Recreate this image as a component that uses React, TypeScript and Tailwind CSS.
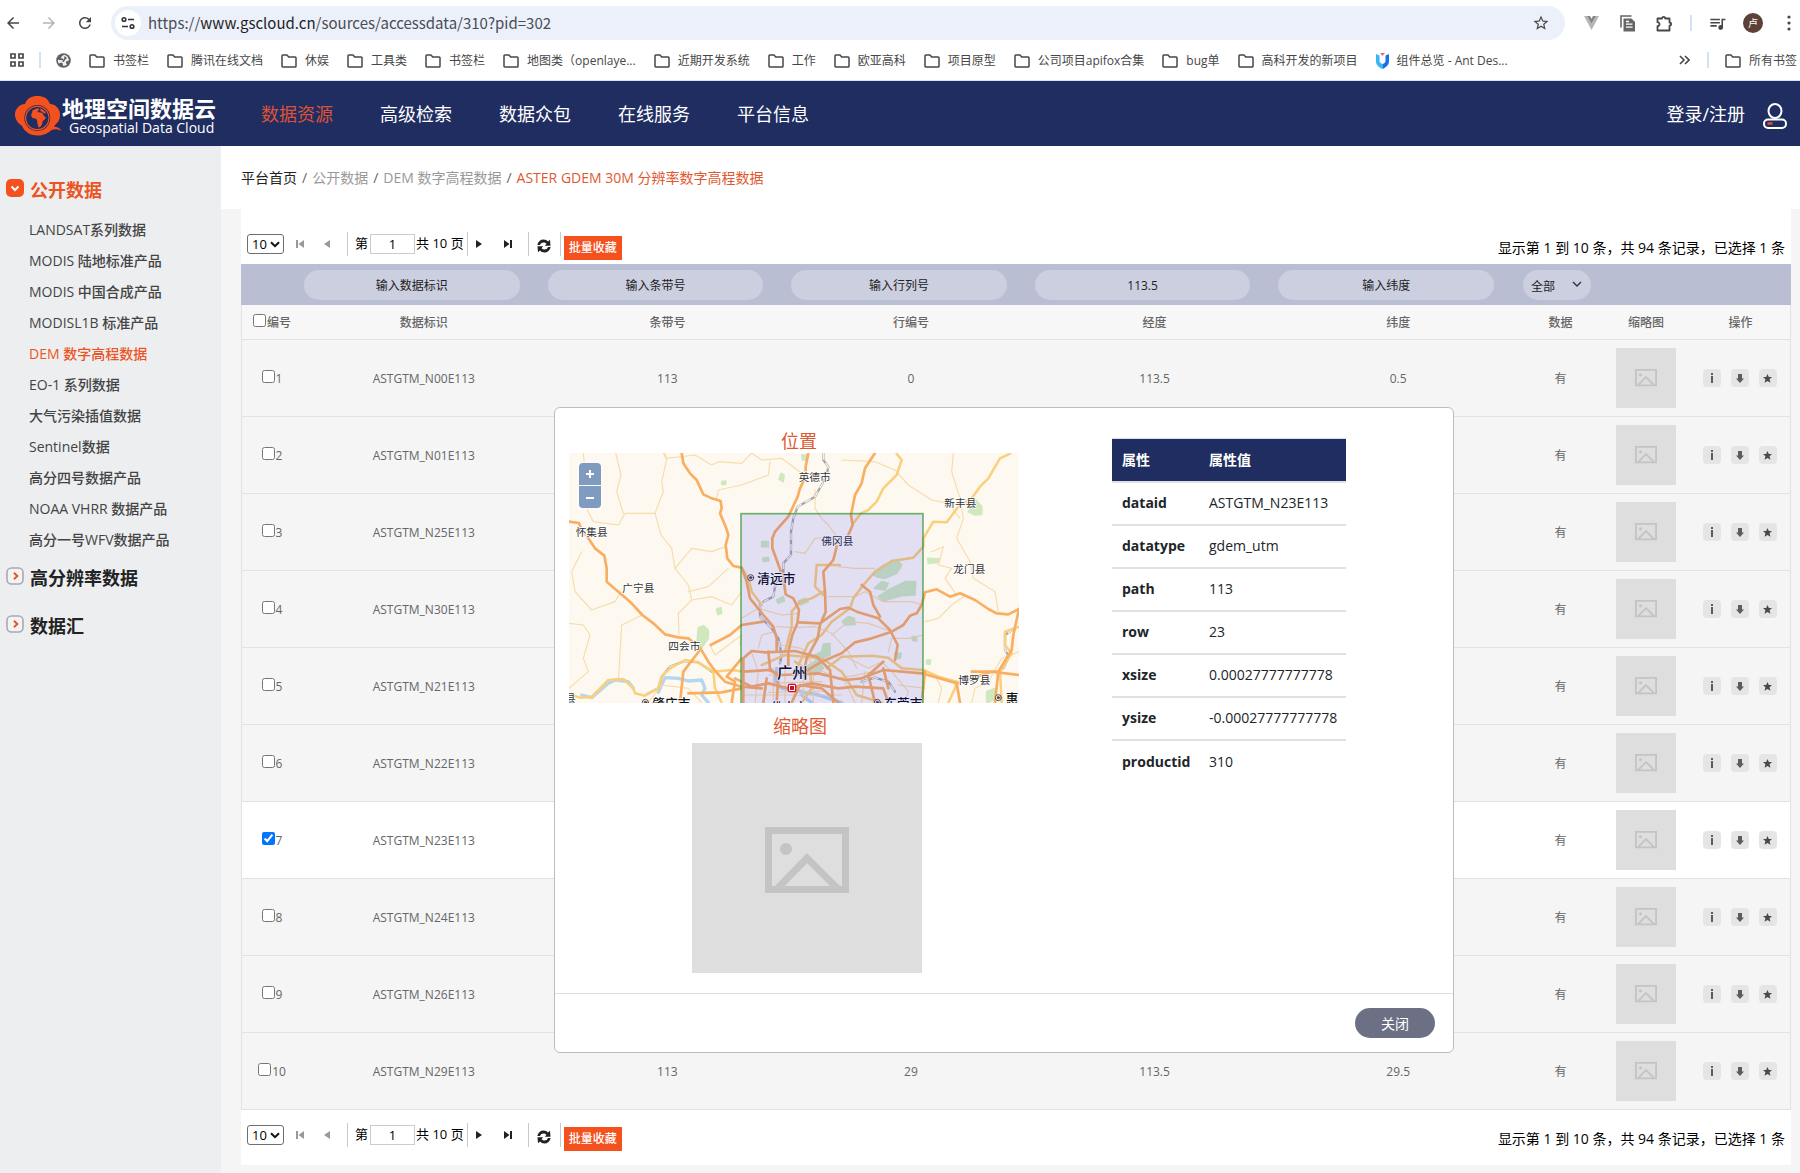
import React, { useState } from "react";
import { MdArrowBack, MdArrowForward, MdRefresh, MdStarOutline, MdQueueMusic } from "react-icons/md";

const HEADER_LINKS = ["数据资源", "高级检索", "数据众包", "在线服务", "平台信息"];

const BOOKMARKS = [
  "书签栏",
  "腾讯在线文档",
  "休娱",
  "工具类",
  "书签栏",
  "地图类（openlaye...",
  "近期开发系统",
  "工作",
  "欧亚高科",
  "项目原型",
  "公司项目apifox合集",
  "bug单",
  "高科开发的新项目",
];

const PRODUCTS = [
  "LANDSAT系列数据",
  "MODIS 陆地标准产品",
  "MODIS 中国合成产品",
  "MODISL1B 标准产品",
  "DEM 数字高程数据",
  "EO-1 系列数据",
  "大气污染插值数据",
  "Sentinel数据",
  "高分四号数据产品",
  "NOAA VHRR 数据产品",
  "高分一号WFV数据产品",
];

const LATITUDES = ["00", "01", "25", "30", "21", "22", "23", "24", "26", "29"];

const FILTERS = [
  { label: "输入数据标识", value: "" },
  { label: "输入条带号", value: "" },
  { label: "输入行列号", value: "" },
  { label: "输入经度", value: "113.5" },
  { label: "输入纬度", value: "" },
];

const ATTRIBUTES: [string, string][] = [
  ["dataid", "ASTGTM_N23E113"],
  ["datatype", "gdem_utm"],
  ["path", "113"],
  ["row", "23"],
  ["xsize", "0.00027777777778"],
  ["ysize", "-0.00027777777778"],
  ["productid", "310"],
];

function FolderIcon() {
  return (
    <svg className="h-3.5 w-4 shrink-0" viewBox="0 0 16 14" fill="none" stroke="#474747" strokeWidth="1.5" strokeLinejoin="round">
      <path d="M1 12.2V1.8C1 1.3 1.3 1 1.8 1H6l1.7 2h6.5c.5 0 .8.3.8.8v8.4c0 .5-.3.8-.8.8H1.8c-.5 0-.8-.3-.8-.8Z" />
    </svg>
  );
}

function BrowserChrome() {
  return (
    <div className="border-b border-[#d3e0f5] bg-white text-[#474747]">
      <div className="flex h-10 items-end">
        <div className="flex h-[34px] w-[111px] shrink-0 items-center gap-[18px] pl-1">
          <button aria-label="后退"><MdArrowBack size={18} /></button>
          <button aria-label="前进" className="text-[#b4b4b4]"><MdArrowForward size={18} /></button>
          <button aria-label="刷新"><MdRefresh size={18} /></button>
        </div>
        <div className="flex h-[34px] flex-1 items-center rounded-full bg-[#ebf0fa] pl-[4px] pr-[15px]">
          <button aria-label="网站信息" className="flex size-[26px] shrink-0 items-center justify-center rounded-full bg-white">
            <svg width="14" height="14" viewBox="0 0 14 14" fill="none" stroke="#333" strokeWidth="1.6">
              <circle cx="3" cy="3.5" r="1.8" />
              <path d="M7 3.5h6M1 10.5h6" />
              <circle cx="11" cy="10.5" r="1.8" />
            </svg>
          </button>
          <p className="ml-[7px] flex-1 pb-px font-['Noto_Sans_CJK_SC',sans-serif] text-[15px] leading-5 text-[#4a4d52]">
            https://<span className="text-[#1f1f1f]">www.gscloud.cn</span>/sources/accessdata/310?pid=302
          </p>
          <button aria-label="收藏此标签页"><MdStarOutline size={18} /></button>
        </div>
        <div className="flex h-[34px] w-[235px] shrink-0 items-center">
          <button aria-label="Vue 开发者工具" className="ml-[19px]">
            <svg width="15" height="14" viewBox="0 0 15 14">
              <path d="M0 0h3l4.500 7.800L12 0h3L7.500 14Z" fill="#b5b5b5" />
              <path d="M3 0h3l1.500 2.700L9 0h3L7.500 7.800Z" fill="#858585" />
            </svg>
          </button>
          <button aria-label="复制扩展" className="ml-[21px]">
            <svg width="16" height="17" viewBox="0 0 16 17">
              <path d="M1 12.500V1h10.500" fill="none" stroke="#666" strokeWidth="1.600" />
              <path d="M3.500 3.500h8l3.500 3.500v9.500H3.500Z" fill="#666" />
              <path d="M6 9.200h6.500M6 12.200h6.500M6 6.500h3" stroke="#fff" strokeWidth="1.300" />
            </svg>
          </button>
          <button aria-label="扩展程序" className="ml-[20px]">
            <svg width="17" height="17" viewBox="0 0 17 17" fill="none" stroke="#474747" strokeWidth="1.800" strokeLinejoin="round">
              <path d="M1.500 3.500H6a1.600 1.600 0 0 1 3.200 0h4.300v4a1.600 1.600 0 0 1 0 3.200v4.800h-12v-4.300a2 2 0 0 0 0-4Z" />
            </svg>
          </button>
          <span className="ml-[17px] h-4 w-[2px] bg-[#d3e0f5]" />
          <button aria-label="媒体控件" className="ml-[16px]"><MdQueueMusic size={19} /></button>
          <button aria-label="个人资料" className="ml-[16px] flex size-5 items-center justify-center rounded-full bg-[#5d4037] text-[10px] leading-none text-white">卢</button>
          <button aria-label="更多" className="ml-auto mr-[9px]">
            <svg width="4" height="16" viewBox="0 0 4 16" fill="#474747">
              <circle cx="2" cy="2" r="1.600" /><circle cx="2" cy="8" r="1.600" /><circle cx="2" cy="14" r="1.600" />
            </svg>
          </button>
        </div>
      </div>
      <nav aria-label="书签" className="flex h-10 items-center whitespace-nowrap pl-[10px] text-xs">
        <svg className="shrink-0" width="14" height="14" viewBox="0 0 14 14" fill="none" stroke="#474747" strokeWidth="1.700">
          <path d="M1 1h4v4H1ZM9 1h4v4H9ZM1 9h4v4H1ZM9 9h4v4H9Z" />
        </svg>
        <span className="ml-[15px] h-4 w-[2px] shrink-0 bg-[#d3e0f5]" />
        <svg className="ml-[15px] shrink-0" width="15" height="15" viewBox="0 0 15 15">
          <circle cx="7.500" cy="7.500" r="7.300" fill="#5f6368" />
          <path d="M8 1.800 5.200 4c-.6 1 .3 1.600 1.300 1.500 1.500-.1 1.200 1.500.2 1.800L3 7l-1-.4c-.3 1.500 0 2.800.7 4l2.600-1.200 1.400.9.300 2.500c1.500.2 3-.2 4-1l-1.200-2 .6-1.600 2.500-.8C12.800 4.800 11 2.400 8 1.800Z" fill="#fff" fillOpacity=".9" />
          <path d="m8.500 3 2.500 2-1.500 1.200L7.800 9 6 8.500 8 6Z" fill="#5f6368" />
        </svg>
        <div className="ml-[18px] flex items-center gap-[18px] pt-px">
          {BOOKMARKS.map((name, i) => (
            <a href="#" key={i} className="flex items-center gap-2"><FolderIcon />{name}</a>
          ))}
          <a href="#" className="flex items-center gap-2">
            <svg width="13" height="16" viewBox="0 0 13 16">
              <path d="M0 1l3.500 1.500v5c0 1.800 1 2.800 3 3.600V16C2 13.800 0 11.500 0 8Z" fill="#35b6f5" />
              <path d="M13 1L9.500 2.500v5c0 1.800-1 2.800-3 3.600V16C11 13.800 13 11.500 13 8Z" fill="#1673e6" />
              <path d="M4 0h5L6.500 3Z" fill="#ef6a6f" />
            </svg>
            组件总览 - Ant Des...
          </a>
        </div>
        <button aria-label="更多书签" className="ml-auto">
          <svg width="11" height="10" viewBox="0 0 11 10" fill="none" stroke="#474747" strokeWidth="1.600"><path d="m1 1 4 4-4 4M6 1l4 4-4 4" /></svg>
        </button>
        <span className="ml-[17px] mr-[16px] h-4 w-[2px] shrink-0 bg-[#d3e0f5]" />
        <a href="#" className="mr-[3px] flex items-center gap-2 pt-px"><FolderIcon />所有书签</a>
      </nav>
    </div>
  );
}

function SiteHeader() {
  return (
    <header className="flex h-[65px] items-center bg-[#202d61] text-lg leading-6 text-white">
      <a href="#" className="flex w-[261px] shrink-0 items-center pl-[15px]">
        <svg className="mt-1 shrink-0" width="47" height="40" viewBox="0 0 47 40">
          <path d="M10 8C12 2 17 0 22.500 0S33 2 35 8c6 .5 10 5 10 11 0 4-1.500 7-4 9-1 1-1.500 2-2 2.500 3 .5 6 1.500 7.500 4.500-3.500-2-6.500-2-10-1-4.500 4-8.500 5.500-14 5.500-6.500 0-12.500-3-15.500-9.500C2.500 27 0 23 0 18.500 0 13 4 8.500 10 8Z" fill="#f5511e" />
          <circle cx="22.300" cy="22" r="13" fill="#202d61" />
          <circle cx="22.300" cy="22" r="11.700" fill="none" stroke="#f5511e" strokeWidth="1.200" />
          <path d="m17.500 14.500 3-1.500 2.500-.8 1.500 1.300-1.500 1-.5 1.500 3 .5 2 .5 1.500 3 2 1.500-1.500 2-2 2-.5 3-1.800 2.500-1.700.5-1-3.500-.5-4-1.500-1.500-3-.5-1.500-2.500 1-3 .5-2Z" fill="#f5511e" />
          <path d="m25 12.500 3.500 1.500 2.500 3-1.500.5-2-1.500-2-1Z" fill="#f5511e" />
        </svg>
        <span className="flex flex-col pt-1">
          <span className="text-[22px] font-bold leading-6">地理空间数据云</span>
          <span className="pl-[7px] text-sm font-medium leading-4">Geospatial Data Cloud</span>
        </span>
      </a>
      <nav className="flex gap-[47px]">
        {HEADER_LINKS.map((name, i) => (
          <a href="#" key={name} className={i === 0 ? "text-[#dd5237]" : ""}>{name}</a>
        ))}
      </nav>
      <a href="#" className="ml-auto mr-[13px] flex items-center gap-[18px]">
        登录/注册
        <svg className="mt-1" width="24" height="26" viewBox="0 0 24 26" fill="none" stroke="#fff" strokeWidth="2">
          <ellipse cx="12" cy="8" rx="6.500" ry="7" />
          <rect x="1" y="16.500" width="22" height="8.500" rx="4" />
          <path d="M4.500 20.500h5" stroke="#e0532f" strokeWidth="2.500" />
        </svg>
      </a>
    </header>
  );
}

function SectionIcon({ open }: { open: boolean }) {
  return open ? (
    <svg className="mb-1 shrink-0" width="18" height="18" viewBox="0 0 18 18">
      <rect width="18" height="18" rx="5" fill="#f5511e" />
      <path d="m5.500 7.500 3.500 3.500 3.500-3.500" fill="none" stroke="#fff" strokeWidth="2" />
    </svg>
  ) : (
    <svg className="mb-1 shrink-0" width="18" height="18" viewBox="0 0 18 18" fill="none">
      <rect x="1" y="1" width="16" height="16" rx="4.500" fill="#f3f3f4" stroke="#a9a9b0" strokeWidth="1.600" />
      <path d="m8 5.800 3.300 3.200L8 12.200" stroke="#e9521f" strokeWidth="1.900" />
    </svg>
  );
}

function Sidebar() {
  return (
    <aside className="w-[221px] shrink-0 bg-[#eceef0] pl-1.5 pt-8 text-[#222]">
      <a href="#" className="flex h-6 items-center gap-1.5 text-lg font-bold text-[#ec5424]"><SectionIcon open />公开数据</a>
      <ul className="mb-[11px] mt-3 pl-[23px] text-sm font-medium text-[#444]">
        {PRODUCTS.map((name, i) => (
          <li key={name}>
            <a href="#" className={i === 4 ? "block leading-[31px] text-[#ec5424]" : "block leading-[31px]"}>{name}</a>
          </li>
        ))}
      </ul>
      <a href="#" className="flex h-6 items-center gap-1.5 text-lg font-bold"><SectionIcon open={false} />高分辨率数据</a>
      <a href="#" className="mt-6 flex h-6 items-center gap-1.5 text-lg font-bold"><SectionIcon open={false} />数据汇</a>
    </aside>
  );
}

function Divider() {
  return <span className="h-6 w-px shrink-0 bg-[#c9c9c9]" />;
}

function Pager({ id }: { id: string }) {
  return (
    <div className="flex h-[45px] items-start justify-between px-1.5 text-[13px] text-black">
      <div className="mt-[13px] flex h-6 items-center">
        <span className="relative flex">
          <select aria-label="每页条数" defaultValue="10" className="h-5 w-[37px] appearance-none rounded-[3px] border border-[#6f6f6f] bg-white pl-1 text-[13px] leading-4">
            <option>10</option>
            <option>20</option>
          </select>
          <svg className="pointer-events-none absolute right-1 top-[7px]" width="10" height="7" viewBox="0 0 10 7" fill="none" stroke="#111" strokeWidth="2"><path d="m1 1.200 4 4 4-4" /></svg>
        </span>
        <button aria-label="第一页" className="ml-[12px]">
          <svg width="8" height="8" viewBox="0 0 8 8" fill="#999"><path d="M0 0h2v8H0ZM8 0v8L2.500 4Z" /></svg>
        </button>
        <button aria-label="上一页" className="ml-[20px] mr-[17px]">
          <svg width="6" height="8" viewBox="0 0 6 8" fill="#999"><path d="M6 0v8L0 4Z" /></svg>
        </button>
        <Divider />
        <label htmlFor={id} className="ml-[7px]">第</label>
        <input id={id} defaultValue="1" className="ml-[2px] h-5 w-[45px] border border-[#ccc] text-center text-[13px]" />
        <span className="ml-px mr-[3px] whitespace-nowrap">共 10 页</span>
        <Divider />
        <button aria-label="下一页" className="ml-[8px]">
          <svg width="6" height="8" viewBox="0 0 6 8" fill="#222"><path d="M0 0v8l6-4Z" /></svg>
        </button>
        <button aria-label="最后一页" className="ml-[22px] mr-[16px]">
          <svg width="8" height="8" viewBox="0 0 8 8" fill="#222"><path d="M6 0h2v8H6ZM0 0v8l5.500-4Z" /></svg>
        </button>
        <Divider />
        <button aria-label="刷新列表" className="ml-[8px] mr-[9px] mt-1">
          <svg width="14" height="14" viewBox="0 0 14 14" fill="#222">
            <path d="M.3 6C1 2.500 3.500.5 6.500.5c2 0 3.500.8 4.500 2L13 .8l.5 6H7.800l1.700-2C7.500 2.800 4 3 3 6ZM13.700 8c-.7 3.500-3.200 5.500-6.200 5.500-2 0-3.500-.8-4.500-2L1 13.200l-.5-6h5.700l-1.700 2C6.500 11.200 10 11 11 8Z" />
          </svg>
        </button>
        <Divider />
        <button className="ml-[3px] mt-2 h-6 w-[58px] bg-[#f5511e] text-xs font-medium text-white">批量收藏</button>
      </div>
      <p className="mt-[19px] text-sm leading-5">显示第 1 到 10 条，共 94 条记录，已选择 1 条</p>
    </div>
  );
}

function PictureIcon({ className }: { className: string }) {
  return (
    <svg className={className} viewBox="0 0 84 66" fill="none" stroke="#c4c4c4" strokeWidth="7">
      <path d="M3.500 3.500h77v59h-77Z" />
      <path d="M12 62 42 31l31 31" />
      <circle cx="21" cy="22" r="6" fill="#c4c4c4" stroke="none" />
    </svg>
  );
}

function RowActions() {
  return (
    <div className="flex justify-center gap-2.5 pr-0.5">
      <button aria-label="详情" className="flex size-[18px] items-center justify-center rounded bg-[#e5e5e5]">
        <svg width="4" height="10" viewBox="0 0 4 10" fill="#5c5c5c"><path d="M1 0h2v2H1ZM1 3h2v7H1Z" /></svg>
      </button>
      <button aria-label="下载" className="flex size-[18px] items-center justify-center rounded bg-[#e5e5e5]">
        <svg width="8" height="9" viewBox="0 0 8 9" fill="#5c5c5c"><path d="M2 0h4v4.500h2L4 9 0 4.500h2Z" /></svg>
      </button>
      <button aria-label="收藏" className="flex size-[18px] items-center justify-center rounded bg-[#e5e5e5]">
        <svg width="9" height="9" viewBox="0 0 10 10" fill="#4a4a4a"><path d="m5 0 1.500 3.400H10L7.300 5.800l1 4L5 7.700 1.700 9.800l1-4L0 3.400h3.500Z" /></svg>
      </button>
    </div>
  );
}

function DataTable() {
  const [selected, setSelected] = useState<number[]>([6]);
  const toggle = (i: number) =>
    setSelected((s) => (s.includes(i) ? s.filter((n) => n !== i) : [...s, i]));
  return (
    <table className="w-full table-fixed border-separate border-spacing-0 text-center text-xs text-[#666]">
      <colgroup>
        <col className="w-[61px]" />
        <col /><col /><col /><col /><col />
        <col className="w-[81px]" />
        <col className="w-[90px]" />
        <col className="w-[100px]" />
      </colgroup>
      <thead>
        <tr className="h-[41px] bg-[#b9bed2]">
          <td />
          {FILTERS.map((f) => (
            <td key={f.label} className="pl-[2px] pr-[26px]">
              <input aria-label={f.label} placeholder={f.label} defaultValue={f.value} className="block h-[30px] w-full rounded-full bg-[#cccfe0] pt-0.5 text-center text-[#222] placeholder:text-[#222]" />
            </td>
          ))}
          <td className="pl-[3px]">
            <span className="relative flex w-[68px]">
              <select aria-label="数据" className="h-[30px] w-full appearance-none rounded-full bg-[#cccfe0] pl-2 pt-1 text-[#222]">
                <option>全部</option>
              </select>
              <svg className="pointer-events-none absolute right-[9px] top-[11px]" width="10" height="7" viewBox="0 0 10 7" fill="none" stroke="#333" strokeWidth="1.400"><path d="m1 1 4 4 4-4" /></svg>
            </span>
          </td>
          <td /><td />
        </tr>
        <tr className="h-[35px] bg-[#f7f7f7] [&>th]:border-b [&>th]:border-[#e2e2e2] [&>th]:pt-0.5 [&>th]:font-medium">
          <th className="border-l">
            <label className="flex items-center justify-center gap-px"><input type="checkbox" className="mb-1.5 size-[13px]" />编号</label>
          </th>
          <th>数据标识</th>
          <th>条带号</th>
          <th>行编号</th>
          <th>经度</th>
          <th>纬度</th>
          <th>数据</th>
          <th>缩略图</th>
          <th className="border-r">操作</th>
        </tr>
      </thead>
      <tbody>
        {LATITUDES.map((lat, i) => (
          <tr key={lat} className={(selected.includes(i) ? "bg-white" : "bg-[#f5f5f5]") + " h-[77px] [&>td]:border-b [&>td]:border-[#e2e2e2]"}>
            <td className="border-l pt-0.5">
              <label className="flex items-center justify-center gap-px">
                <input type="checkbox" checked={selected.includes(i)} onChange={() => toggle(i)} className="mb-1.5 size-[13px]" />
                {i + 1}
              </label>
            </td>
            <td className="pt-0.5">ASTGTM_N{lat}E113</td>
            <td className="pt-0.5">113</td>
            <td className="pt-0.5">{Number(lat)}</td>
            <td className="pt-0.5">113.5</td>
            <td className="pt-0.5">{Number(lat) + 0.5}</td>
            <td className="pt-0.5">有</td>
            <td>
              <div className="mx-auto flex size-[60px] items-center justify-center bg-[#dedede]">
                <PictureIcon className="w-[22px]" />
              </div>
            </td>
            <td className="border-r"><RowActions /></td>
          </tr>
        ))}
      </tbody>
    </table>
  );
}

const MINOR_ROADS = [
  "M85 144 90 200 80 250 95 310 115 350 190 360 210 325 300 325 325 260 320 230 335 165 325 144",
  "M182 144 198 210 185 260 205 325",
  "M330 144 335 160 420 150 470 180 490 170 560 175 590 144",
  "M300 325 318 390 350 430 360 490 400 540 410 585 370 625 372 690",
  "M360 490 410 430 470 440 512 425",
  "M400 560 460 545 520 490",
  "M410 585 470 575 530 600 560 560",
  "M485 280 490 255 560 240 640 210 645 170",
  "M590 144 620 165 680 160 740 205",
  "M80 440 50 500 60 560 110 615 180 590 195 565",
  "M42 655 85 660 105 690 85 760 100 800 42 850",
  "M190 830 200 660 262 630",
  "M860 165 960 170 1020 195 1060 240 1130 285 1180 295 1215 340",
  "M1195 144 1190 200 1215 280 1225 340 1205 400 1245 470 1255 520 1320 560 1330 620",
  "M1130 440 1165 425 1150 480 1190 490 1170 520 1205 570",
  "M1110 650 1150 640 1190 600 1225 575",
  "M780 310 800 340 820 360 845 395 780 400 750 445 720 440",
  "M780 255 780 310",
  "M850 485 900 490 960 490",
  "M820 575 900 575 930 560 985 590 1070 590 1100 600",
  "M665 665 720 668 780 665 830 685 880 740 905 790",
  "M610 730 620 690 660 680",
  "M560 640 610 610 680 630 730 625",
  "M465 720 480 750 560 690 555 720",
  "M590 744 610 800 600 893",
  "M680 720 740 730 780 790 850 820 960 800",
  "M880 760 940 790 980 770 1010 800 1060 860 1050 893",
  "M830 690 880 650 940 655 1010 680",
  "M1000 740 1010 700 1060 700 1105 690",
  "M280 893 320 840 400 850 440 893",
  "M1250 893 1260 850 1300 830 1340 760 1392 740",
  "M640 810 780 810M640 835 800 830M640 862 810 858M655 790V893M690 780V893M745 790V893M775 770V893M565 870H860",
  "M1140 810 1160 850 1150 893M870 830 900 893M930 800 920 893M1030 840 1110 850",
];

const ORANGE_ROADS = [
  "M380 144 385 175 405 205 425 225 445 268 470 280 497 288 500 310 495 325 512 365 520 390 512 420 517 460 535 483 560 488 575 530 585 580 605 605 625 630 655 665 665 700 665 740",
  "M42 350 72 354 80 375 95 392 120 430 148 452 155 490 155 530 190 560 225 590 262 630 295 655 330 688 370 697 400 700 435 728 460 770 478 795 510 830 560 845 620 850",
  "M760 144 752 185 752 215 735 250 728 275 700 335 660 380 652 400 652 430 665 465 685 520 692 568 715 580 732 615 727 655 712 690 700 740 700 780",
  "M960 144 930 190 920 235 900 270 888 330 893 360 880 390",
  "M845 425 835 465 805 500 810 560 812 620 795 660 788 700 755 760 745 810",
  "M1392 612 1360 628 1325 625 1300 612 1260 585 1215 565 1185 575 1145 553 1110 562 1100 600 1085 625 1065 632 1045 660 1010 680 950 700 900 712 860 745 800 770 750 800",
  "M467 720 525 690 560 660 625 650",
  "M732 652 795 655 855 612 880 608 905 620 970 640 1005 675 1028 720 1020 765",
  "M920 540 945 560 955 600 975 635",
  "M565 893 565 760 590 738 630 742 720 738 785 755 825 795 835 893",
  "M540 820 590 845 640 835 700 850 770 835 850 850 900 845 985 850 1000 893",
  "M640 740 645 790 670 815 665 893M565 800 640 795 680 810 790 805 870 825 920 820 985 795 1100 805 1205 835 1310 800 1392 810",
  "M375 893 385 800 435 735M400 865 500 862 560 850M985 770 940 810 960 893M985 790 1000 850M1110 800 1100 893M1205 835 1215 893",
  "M1392 612 1375 690 1370 735 1330 800 1250 800M1330 800 1320 893M530 893 540 830 515 815 560 760",
  "M625 893 635 820M710 893 735 840 800 850 850 893",
];

const YELLOW_ROADS = [
  "M1365 146 1335 160 1300 220 1275 245 1250 280 1210 305 1175 352 1135 350 1105 400 1105 425 1075 458 1010 468 960 500 925 540 895 580 885 610 830 650 800 690 760 715 740 760 720 800",
  "M1025 146 1040 165 1025 210 985 250 965 290 940 315 918 325 895 355",
  "M42 868 75 878 110 876 160 825 205 822 235 850 240 865 270 872 310 850 320 815 345 790 390 765 430 772 475 800 530 795 565 800",
  "M855 480 785 480 780 545 805 570M805 560 770 580 735 590 710 620 710 665 690 740",
  "M560 488 580 520 590 560 620 600M815 790 860 755 950 752 1000 758 1040 790 1105 795 1150 815 1205 830",
  "M1392 665 1350 680 1350 720 1370 745 1335 800 1340 893M475 800 480 850 500 893M1180 893 1200 850 1205 830",
  "M740 893 770 850 765 800 720 770M620 780 690 750 800 760 860 800 905 870 980 893",
];

const GREEN_AREAS = [
  "M430 668 445 662 460 675 460 700 440 728 425 720Z",
  "M955 510 985 480 1030 468 1040 480 1025 505 990 520 965 515Z",
  "M958 550 980 530 1000 535 990 555ZM970 575 1000 555 1050 530 1082 530 1080 570 1040 572 985 588Z",
  "M862 650 880 635 898 640 900 658 870 660ZM770 755 800 740 805 718 825 715 825 750 790 765ZM755 785 790 762 805 790 780 810Z",
  "M1240 320 1262 285 1280 305 1280 328 1260 330Z",
  "M672 222 678 205 687 210 685 230ZM740 150 755 150 752 165 742 165ZM620 410 640 410 640 425 620 425ZM623 460 640 457 642 467 625 470Z",
  "M665 585 685 575 688 588 670 595ZM730 588 750 580 760 590 735 600ZM1118 460 1155 462 1150 472 1120 475ZM485 612 498 608 500 625 488 628Z",
  "M500 230 512 228 512 238 500 238ZM1072 695 1085 695 1085 708 1072 706ZM1115 765 1127 765 1125 778 1114 776ZM1020 745 1038 745 1036 760 1020 760ZM1295 860 1320 850 1315 885 1295 893Z",
];

const RAIL = [
  "M805 144 805 165 820 185 815 210 800 240 780 275 728 305 715 340 708 380 708 450 685 475 685 510 660 545 655 575 625 590",
  "M615 600 615 635 650 670 670 700 680 750 675 775",
  "M390 768 345 785 320 815 310 850 275 868M390 768 430 772 470 800",
  "M1375 672 1350 690 1350 735 1362 755 1345 790M920 830 960 818 1000 830 1020 860",
];

const WATER = [
  "M80 870 110 878 160 835 180 825 220 830 235 850M310 862 330 818 370 820 400 828 440 825 450 850 440 870 460 893",
  "M665 790 660 830 680 850 740 860 790 870 860 893M740 870 770 893",
];

const PLACES: { name: string; x: number; y: number; size: number; bold?: boolean }[] = [
  { name: "英德市", x: 731, y: 228, size: 32 },
  { name: "新丰县", x: 1168, y: 306, size: 32 },
  { name: "怀集县", x: 62, y: 393, size: 32 },
  { name: "佛冈县", x: 799, y: 420, size: 32 },
  { name: "龙门县", x: 1195, y: 504, size: 32 },
  { name: "清远市", x: 607, y: 534, size: 38, bold: true },
  { name: "广宁县", x: 202, y: 561, size: 32 },
  { name: "四会市", x: 340, y: 735, size: 32 },
  { name: "博罗县", x: 1210, y: 837, size: 32 },
  { name: "广州", x: 666, y: 819, size: 46, bold: true },
  { name: "肇庆市", x: 292, y: 908, size: 38, bold: true },
  { name: "东莞市", x: 988, y: 908, size: 38, bold: true },
  { name: "惠", x: 1352, y: 893, size: 38, bold: true },
  { name: "县", x: 30, y: 890, size: 32 },
  { name: "佛山市", x: 648, y: 920, size: 36, bold: true },
];

function LocationMap() {
  return (
    <div className="relative h-[250px] w-[450px] overflow-hidden">
      <svg width="450" height="250" viewBox="42 144 1350 750" fill="none" strokeLinejoin="round" strokeLinecap="round">
        <rect x="42" y="144" width="1350" height="750" fill="#fdf9f1" />
        {GREEN_AREAS.map((d) => <path key={d} d={d} fill="#cfe8bd" stroke="#cfe8bd" strokeWidth="5" />)}
        {WATER.map((d) => <path key={d} d={d} stroke="#b5d7ee" strokeWidth="10" />)}
        {MINOR_ROADS.map((d) => <path key={d} d={d} stroke="#f8dcab" strokeWidth="3.500" />)}
        {RAIL.map((d) => (
          <g key={d}>
            <path d={d} stroke="#a9a9a9" strokeWidth="7" />
            <path d={d} stroke="#f7f2e8" strokeWidth="4" strokeDasharray="20 12" strokeLinecap="butt" />
          </g>
        ))}
        {YELLOW_ROADS.map((d) => <path key={d} d={d} stroke="#fad07a" strokeWidth="7.500" />)}
        {ORANGE_ROADS.map((d) => <path key={d} d={d} stroke="#f9ae62" strokeWidth="8" />)}
        {PLACES.map((p) => (
          <text key={p.name} x={p.x} y={p.y} fontSize={p.size} fontWeight={p.bold ? 500 : 400} fill={p.bold ? "#111" : "#333"} stroke="#fff" strokeWidth="5" paintOrder="stroke">
            {p.name}
          </text>
        ))}
        {[[587, 518], [271, 892], [967, 892], [1330, 878]].map(([x, y]) => (
          <g key={x} stroke="#5a4a42" strokeWidth="3">
            <circle cx={x} cy={y} r="9" fill="#fff" />
            <circle cx={x} cy={y} r="3.500" fill="#5a4a42" />
          </g>
        ))}
        <rect x="558" y="326" width="546" height="620" fill="#0000ff" fillOpacity="0.1" stroke="#329632" strokeOpacity="0.7" strokeWidth="5" strokeLinejoin="miter" />
        <rect x="700" y="838" width="22" height="22" rx="4" fill="#fff" stroke="#c8102e" strokeWidth="4" />
        <rect x="705" y="843" width="12" height="12" fill="#c8102e" />
      </svg>
      <div className="absolute left-2 top-2 flex flex-col gap-px rounded bg-white/40 p-0.5 text-white">
        <button aria-label="放大" className="flex size-[22px] items-center justify-center rounded-t-sm bg-[#7f9bc0]">
          <svg width="8" height="8" viewBox="0 0 8 8" stroke="#fff" strokeWidth="2"><path d="M4 0v8M0 4h8" /></svg>
        </button>
        <button aria-label="缩小" className="flex size-[22px] items-center justify-center rounded-b-sm bg-[#7f9bc0]">
          <svg width="8" height="8" viewBox="0 0 8 8" stroke="#fff" strokeWidth="2"><path d="M0 5h8" /></svg>
        </button>
      </div>
    </div>
  );
}

function DetailDialog({ onClose }: { onClose: () => void }) {
  return (
    <section role="dialog" aria-label="数据详情" className="absolute left-[333px] top-[261px] w-[900px] rounded-md border border-[#bdbdbd] bg-white">
      <div className="flex gap-[83px] pb-5 pl-[14px]">
        <div className="w-[460px] pt-[21px]">
          <h2 className="text-center text-lg leading-6 text-[#e0582f]">位置</h2>
          <LocationMap />
          <h2 className="pb-[5px] pl-0.5 pt-[11px] text-center text-lg leading-6 text-[#e0582f]">缩略图</h2>
          <div className="ml-[123px] flex size-[230px] items-center justify-center bg-[#dedede]">
            <PictureIcon className="mt-1 w-[84px]" />
          </div>
        </div>
        <div className="pt-[30px]">
          <table className="w-[234px] text-left text-sm text-[#212529]">
            <thead>
              <tr className="h-[43px] border-b-2 border-t border-b-[#dee2e6] border-t-[#d5dcf0] bg-[#202d61] text-white">
                <th className="w-[87px] pl-2.5 font-bold">属性</th>
                <th className="pl-2.5 font-bold">属性值</th>
              </tr>
            </thead>
            <tbody>
              {ATTRIBUTES.map(([key, value]) => (
                <tr key={key} className="h-[43px] border-b-2 border-[#dee2e6] last:border-b-0">
                  <th className="pl-2.5 font-bold">{key}</th>
                  <td className="whitespace-nowrap pl-2.5">{value}</td>
                </tr>
              ))}
            </tbody>
          </table>
        </div>
      </div>
      <div className="flex h-[59px] items-center justify-end border-t border-[#dedede] pr-[18px]">
        <button onClick={onClose} className="h-[30px] w-20 rounded-full bg-[#6b7084] pt-px text-sm text-white">关闭</button>
      </div>
    </section>
  );
}

export default function App() {
  const [open, setOpen] = useState(true);
  return (
    <div className="min-h-screen bg-[#f5f5f5] font-['Open_Sans','Noto_Sans_CJK_SC',sans-serif]">
      <BrowserChrome />
      <SiteHeader />
      <div className="flex">
        <Sidebar />
        <main className="relative min-w-0 flex-1">
          <nav aria-label="面包屑" className="flex h-[63px] items-center gap-[5px] bg-white pl-5 text-sm text-[#666]">
            <a href="#" className="text-[#222]">平台首页</a>/
            <a href="#" className="text-[#999]">公开数据</a>/
            <a href="#" className="text-[#999]">DEM 数字高程数据</a>/
            <span className="text-[#e0582f]">ASTER GDEM 30M 分辨率数字高程数据</span>
          </nav>
          <div className="mb-2 ml-5 mr-[9px] bg-white py-[10px]">
            <Pager id="page-top" />
            <DataTable />
            <Pager id="page-bottom" />
          </div>
          {open && <DetailDialog onClose={() => setOpen(false)} />}
        </main>
      </div>
    </div>
  );
}
